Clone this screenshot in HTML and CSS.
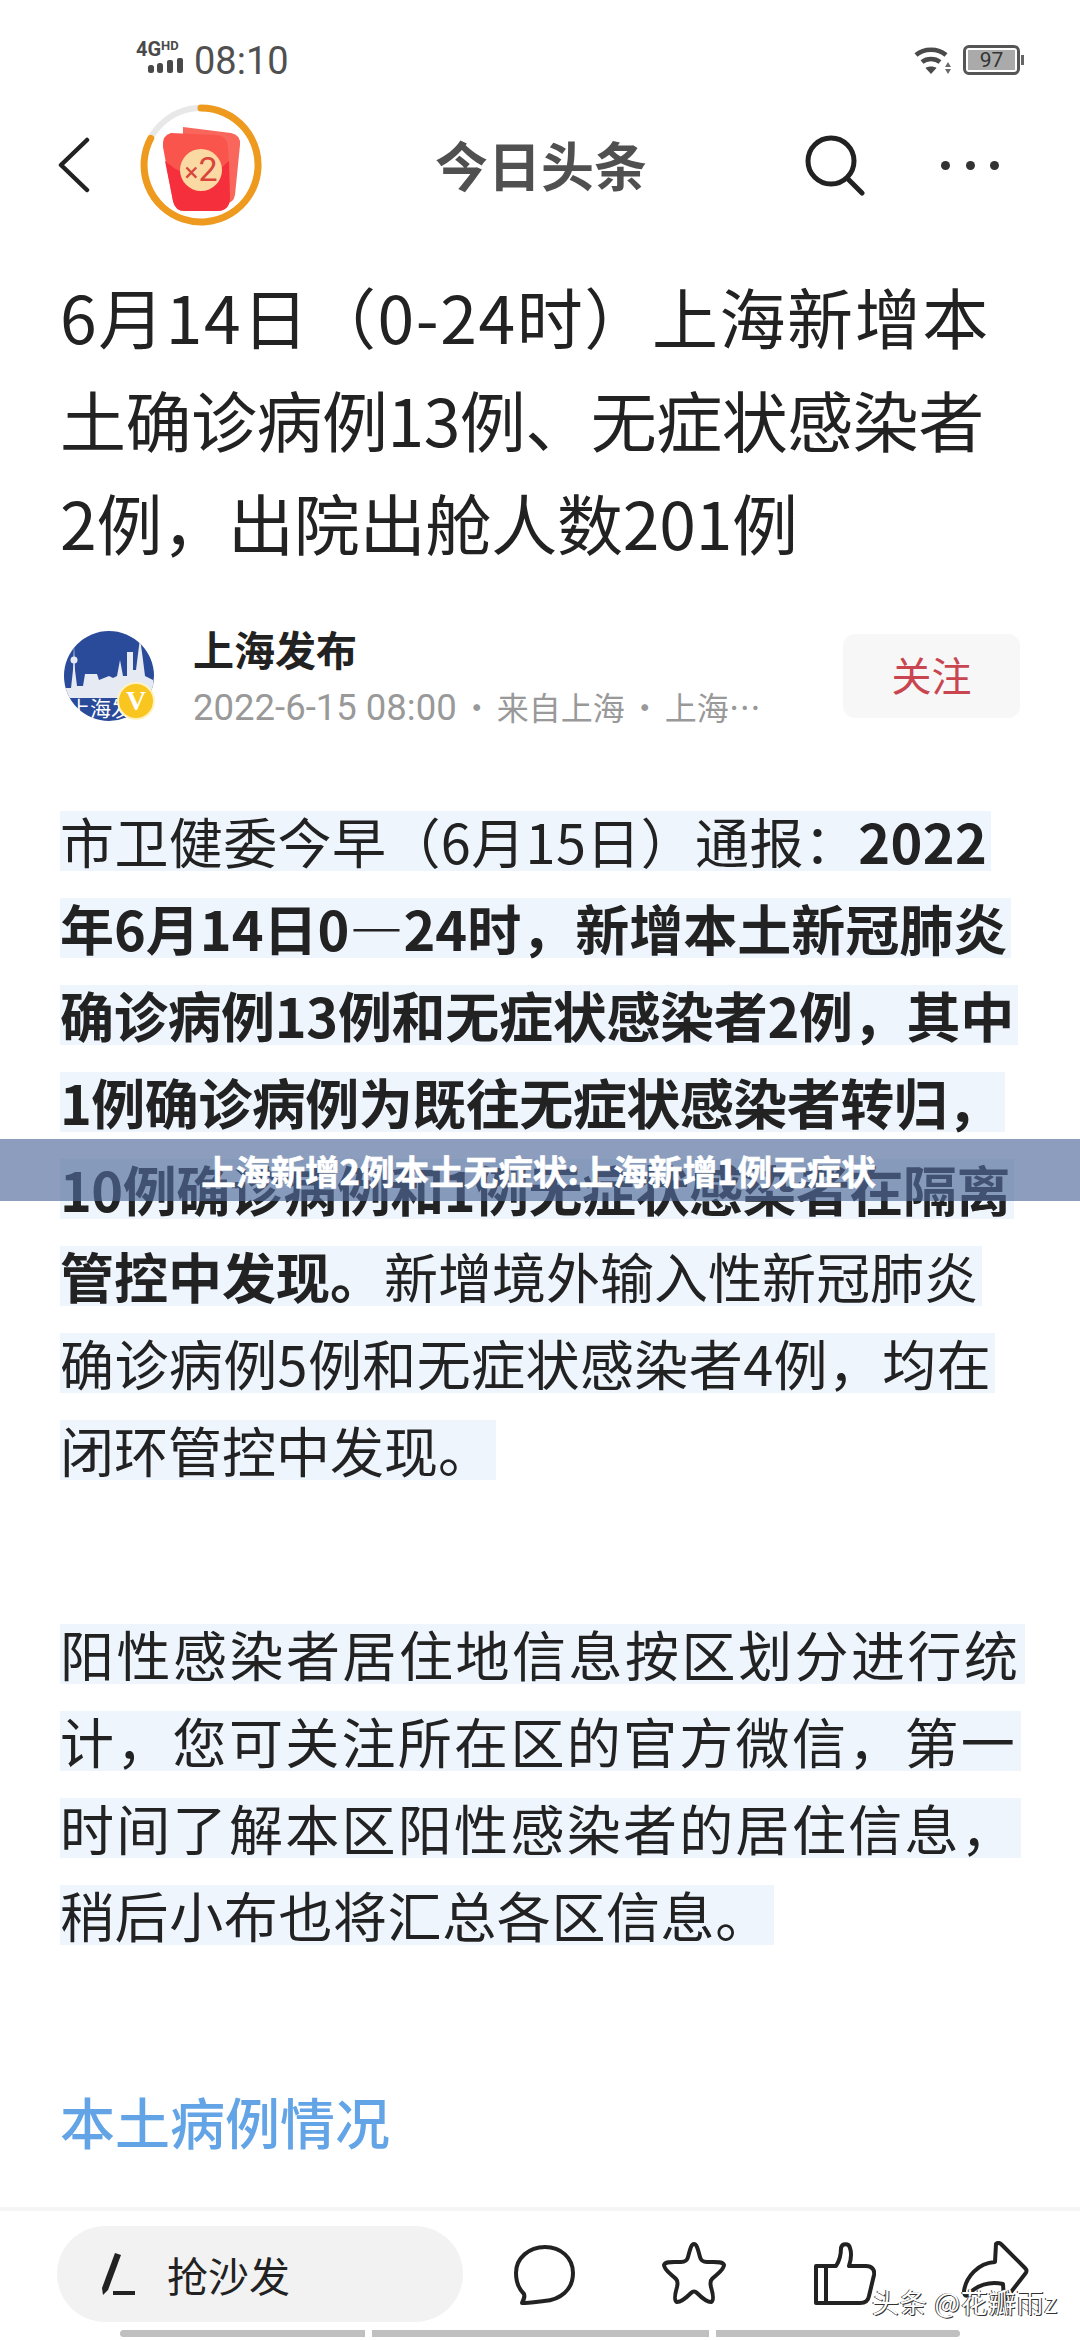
FILE: index.html
```html
<!DOCTYPE html>
<html lang="zh">
<head>
<meta charset="utf-8">
<title>上海新增2例本土无症状</title>
<link rel="stylesheet" href="styles.css">
</head>
<body>
  <div class="page">
    <!-- status bar -->
    <div class="status">
      <div class="net">
        <span class="net-label">4G<sup>HD</sup></span>
        <svg class="bars" width="35" height="15" viewBox="0 0 35 15"><g fill="#4a4a4a"><rect x="0" y="7" width="6" height="8" rx="2.500"/><rect x="9" y="5" width="6" height="10" rx="2.500"/><rect x="19" y="2" width="6" height="13" rx="2"/><rect x="29" y="0" width="6" height="15" rx="2"/></g></svg>
      </div>
      <span class="time">08:10</span>
      <span class="grow"></span>
      <svg class="wifi" width="38" height="28" viewBox="0 0 38 28">
        <g fill="none" stroke="#4a4a4a" stroke-width="4.500">
          <path d="M2 8 C10 1 24 1 32 8"/>
          <path d="M8 15 C13 11 21 11 26 15"/>
        </g>
        <path d="M11.500 21 C14 19 20 19 22.500 21 L17 27Z" fill="#4a4a4a"/>
        <path d="M34 15 l3 5 h-6z M31 22 h6 l-3 5z" fill="#6a6a6a"/>
      </svg>
      <div class="battery"><span class="battery-fill">97</span></div>
    </div>

    <!-- top bar -->
    <div class="topbar">
      <svg class="back" width="32" height="56" viewBox="0 0 32 56"><path d="M29 3 L3 28 L29 53" fill="none" stroke="#222" stroke-width="4.500" stroke-linecap="round" stroke-linejoin="round"/></svg>
      <div class="reward">
        <svg width="124" height="124" viewBox="0 0 124 124">
          <circle cx="62" cy="62" r="57" fill="none" stroke="#e8e8e8" stroke-width="6"/>
          <path d="M62 5 A57 57 0 1 1 11.700 35.300" fill="none" stroke="#ee9a1e" stroke-width="7" stroke-linecap="round"/>
          <path d="M44 24 L92 30 Q102 32 101 42 L96 92 Q94 102 84 100 L44 96Z" fill="#f9665c"/>
          <path d="M32 30 L76 32 Q88 32 89 44 L91 96 Q90 108 78 108 L46 108 Q36 108 34 98 L24 44 Q23 32 32 30Z" fill="#f9554d"/>
          <path d="M26 58 Q60 88 90 58 L91 96 Q90 108 78 108 L46 108 Q36 108 34 98Z" fill="#f52f3c"/>
          <circle cx="62" cy="67" r="21" fill="#fbd9a3"/>
        </svg>
        <span class="reward-label"><small>×</small>2</span>
      </div>
      <span class="brand">今日头条</span>
      <svg class="search" width="60" height="62" viewBox="0 0 60 62"><circle cx="26" cy="26" r="23" fill="none" stroke="#222" stroke-width="5"/><path d="M43 44 L57 58" stroke="#222" stroke-width="5" stroke-linecap="round"/></svg>
      <div class="more"><i></i><i></i><i></i></div>
    </div>

    <h1 class="headline">
      <span class="ls-p16">6月14日（0-24时）上海新增本</span>
      <span class="ls-m5">土确诊病例13例、无症状感染者</span>
      <span class="ls-m2">2例，出院出舱人数201例</span>
    </h1>

    <!-- author row -->
    <div class="author">
      <div class="avatar">
        <svg width="92" height="92" viewBox="0 0 92 92">
          <defs><clipPath id="round"><circle cx="46" cy="46" r="45"/></clipPath></defs>
          <circle cx="46" cy="46" r="45" fill="#2a4a9a"/>
          <path clip-path="url(#round)" d="M0 68 L0 58 L8 58 L10 40 L11 14 L12 40 L14 56 L20 56 L22 44 L34 44 L36 50 L46 46 L50 48 L54 46 L57 30 L60 46 L64 46 L64 22 L70 22 L70 40 L73 40 L77 8 L80 30 L82 46 L90 50 L92 68Z" fill="#e6ebf3"/>
          <circle cx="11" cy="30" r="3.500" fill="#e6ebf3"/>
        </svg>
        <span class="avatar-text">上海发</span>
        <span class="v-badge">V</span>
      </div>
      <div class="author-info">
        <div class="author-name">上海发布</div>
        <div class="author-meta"><span class="date">2022-6-15 08:00</span><span class="sep">·</span>来自上海<span class="sep">·</span>上海…</div>
      </div>
      <div class="follow">关注</div>
    </div>

    <!-- article body, every line has its own highlight band -->
    <div class="para">
      <div class="line ls-p4">市卫健委今早（6月15日）通报：<b>2022</b></div>
      <div class="line"><b>年6月14日0—24时，新增本土新冠肺炎</b></div>
      <div class="line ls-m3"><b>确诊病例13例和无症状感染者2例，其中</b></div>
      <div class="line ls-m5"><b>1例确诊病例为既往无症状感染者转归，</b></div>
      <div class="line ls-m5"><b>10例确诊病例和1例无症状感染者在隔离</b></div>
      <div class="line"><b>管控中发现。</b>新增境外输入性新冠肺炎</div>
      <div class="line ls-p4">确诊病例5例和无症状感染者4例，均在</div>
      <div class="line">闭环管控中发现。</div>
    </div>
    <div class="para">
      <div class="line ls-p25">阳性感染者居住地信息按区划分进行统</div>
      <div class="line ls-p23">计，您可关注所在区的官方微信，第一</div>
      <div class="line ls-p23">时间了解本区阳性感染者的居住信息，</div>
      <div class="line ls-p6">稍后小布也将汇总各区信息。</div>
    </div>
    <h2 class="section">本土病例情况</h2>

    <!-- bottom action bar -->
    <div class="actions">
      <div class="comment-box">
        <svg width="36" height="44" viewBox="0 0 36 44"><path d="M15 1 L21 3 L8 38 L3 43 L2 36Z" fill="#222"/><path d="M13 41 h22" stroke="#222" stroke-width="4"/></svg>
        <span>抢沙发</span>
      </div>
      <svg class="act-comment" width="62" height="60" viewBox="0 0 62 60"><path d="M31 2 C47 2 59 13 59 28 C59 45 46 55 30 56 C21 57 13 58 8 58 C10 54 11 52 10 49 C5 44 2 36 2 28 C2 13 15 2 31 2Z" fill="none" stroke="#222" stroke-width="4" stroke-linejoin="round"/></svg>
      <svg class="act-star" width="64" height="64" viewBox="0 0 64 64"><path d="M32 3 C35 3 36 9 38 16 C39 20 41 21 45 21 C53 21 61 20 62 24 C62 29 55 33 50 38 C48 40 48 42 49 46 C51 53 52 60 49 61 C45 61 39 56 35 52 C33 50 31 50 29 52 C25 56 19 61 15 61 C12 60 13 53 15 46 C16 42 16 40 14 38 C9 33 2 29 2 24 C3 20 11 21 19 21 C23 21 25 20 26 16 C28 9 29 3 32 3Z" fill="none" stroke="#222" stroke-width="4" stroke-linejoin="round"/></svg>
      <svg class="act-like" width="62" height="64" viewBox="0 0 62 64"><path d="M12 24 L22 24 C26 18 27 12 27 6 C28 1 35 1 36 6 C38 12 37 18 35 24 L52 24 C58 24 61 28 60 33 L55 54 C54 60 50 61 46 61 L12 61Z M2 24 H12 V61 H2Z" fill="none" stroke="#222" stroke-width="4" stroke-linejoin="round"/></svg>
      <svg class="act-share" width="68" height="62" viewBox="0 0 68 62"><path d="M34 3 C36 1 38 2 40 4 L63 27 C65 29 65 31 63 33 L42 60 L41 43 C28 40 14 44 6 54 C3 56 2 53 2 50 C4 36 16 22 33 21Z" fill="none" stroke="#222" stroke-width="4" stroke-linejoin="round"/></svg>
    </div>
    <div class="progress"><i class="p1"></i><i class="p2"></i><i class="p3"></i></div>

    <div class="banner">上海新增2例本土无症状:上海新增1例无症状</div>
    <div class="watermark">头条 @花瓣雨z</div>
  </div>
</body>
</html>
```

FILE: styles.css
```css
* {
    box-sizing: border-box;
}

html, body {
    margin: 0;
    padding: 0;
    background: #fff;
}

.page {
    position: relative;
    width: 1080px;
    height: 2340px;
    overflow: hidden;
    display: flex;
    flex-direction: column;
    font-family: "Noto Sans CJK SC", "Noto Sans", Roboto, sans-serif;
    color: #222;
}

/* status bar */
.status {
    height: 95px;
    padding: 41px 60px 0 136px;
    display: flex;
    align-items: flex-start;
    color: #4a4a4a;
}

.net {
    width: 58px;
    display: flex;
    flex-direction: column;
    align-items: flex-start;
}

.net-label {
    font-family: Roboto, sans-serif;
    font-weight: 700;
    font-size: 20px;
    line-height: 17px;
    white-space: nowrap;
}

.net-label sup {
    font-size: 13px;
    line-height: 0;
    vertical-align: 6px;
}

.bars {
    margin: 0 0 0 12px;
}

.time {
    font-family: Roboto, sans-serif;
    font-size: 38px;
    line-height: 40px;
    color: #505050;
}

.grow {
    flex: 1;
}

.wifi {
    margin: 6px 11px 0 0;
}

.battery {
    position: relative;
    width: 57px;
    height: 30px;
    margin-top: 4px;
    border: 3px solid #555;
    border-radius: 6px;
    padding: 2px;
}

.battery:after {
    content: "";
    position: absolute;
    right: -7px;
    top: 7px;
    width: 3px;
    height: 10px;
    background: #666;
}

.battery-fill {
    display: block;
    height: 100%;
    background: #aaa;
    font-family: Roboto, sans-serif;
    font-size: 21px;
    line-height: 20px;
    text-align: center;
    color: #333;
}

/* top bar */
.topbar {
    height: 140px;
    padding: 0 0 0 58px;
    display: flex;
    align-items: center;
}

.back {
    margin-right: 49px;
}

.reward {
    position: relative;
    width: 124px;
    height: 124px;
}

.reward-label {
    position: absolute;
    left: 0;
    right: 0;
    top: 46px;
    text-align: center;
    font-family: Roboto, sans-serif;
    font-size: 34px;
    line-height: 40px;
    color: #d9453a;
}

.reward-label small {
    font-size: 26px;
}

.brand {
    margin: -3px 0 0 172px;
    width: 215px;
    font-size: 53px;
    font-weight: 700;
    color: #505050;
    white-space: nowrap;
}

.search {
    margin: 2px 0 0 155px;
}

.more {
    margin-left: 76px;
    width: 58px;
    display: flex;
    justify-content: space-between;
}

.more i {
    width: 9px;
    height: 9px;
    border-radius: 50%;
    background: #333;
}

/* headline */
.headline {
    margin: 29px 0 0 60px;
    font-size: 66px;
    font-weight: 400;
    line-height: 103px;
    white-space: nowrap;
}

.headline span {
    display: block;
}

/* per line tracking, the source lines are not all set the same */
.ls-p25 { letter-spacing: 2.5px; }
.ls-p23 { letter-spacing: 2.3px; }
.ls-p16 { letter-spacing: 1.6px; }
.ls-p6 { letter-spacing: 0.6px; }
.ls-p4 { letter-spacing: 0.4px; }
.ls-m2 { letter-spacing: -0.2px; }
.ls-m3 { letter-spacing: -0.3px; }
.ls-m5 { letter-spacing: -0.5px; }

/* author */
.author {
    margin-top: 59px;
    padding: 0 60px 0 63px;
    height: 88px;
    display: flex;
    align-items: center;
}

.avatar {
    position: relative;
    width: 92px;
    height: 92px;
    flex: none;
}

.avatar svg {
    display: block;
}

.avatar-text {
    position: absolute;
    left: 6px;
    top: 65px;
    font-size: 21px;
    line-height: 24px;
    color: #fff;
    white-space: nowrap;
}

.v-badge {
    position: absolute;
    left: 54px;
    top: 52px;
    width: 38px;
    height: 38px;
    border-radius: 50%;
    background: #f8c61f;
    border: 2px solid #fff3c4;
    color: #fff;
    font-family: "Liberation Serif", serif;
    font-weight: 700;
    font-size: 28px;
    line-height: 34px;
    text-align: center;
}

.author-info {
    flex: 1;
    margin-left: 38px;
}

.author-name {
    font-size: 41px;
    font-weight: 700;
    line-height: 48px;
    margin-top: -3px;
}

.author-meta {
    margin-top: 11px;
    margin-bottom: -6px;
    font-size: 32px;
    line-height: 46px;
    color: #999;
    white-space: nowrap;
}

.date {
    font-family: Roboto, sans-serif;
    font-size: 36.500px;
}

.sep {
    display: inline-block;
    width: 40px;
    text-align: center;
}

.follow {
    width: 177px;
    height: 84px;
    background: #f7f7f7;
    border-radius: 12px;
    color: #c9454f;
    font-size: 40px;
    line-height: 80px;
    text-align: center;
}

/* article */
.para {
    margin: 91px 0 0 60px;
}

.para + .para {
    margin-top: 117px;
}

.line {
    width: fit-content;
    height: 60px;
    margin-bottom: 27px;
    padding-right: 4px;
    background: #eef5fd;
    font-size: 54px;
    line-height: 60px;
    white-space: nowrap;
}

.line b {
    font-weight: 700;
}

.section {
    margin: 118px 0 0 60px;
    font-size: 55px;
    font-weight: 500;
    line-height: 60px;
    color: #62a4e6;
}

/* bottom bar */
.actions {
    margin-top: auto;
    height: 123px;
    border-top: 4px solid #f5f5f5;
    padding: 15px 0 0 57px;
    display: flex;
    align-items: flex-start;
    position: relative;
}

.comment-box {
    width: 406px;
    height: 96px;
    border-radius: 48px;
    background: #f2f2f2;
    padding-left: 43px;
    display: flex;
    align-items: center;
    font-size: 41px;
}

.comment-box span {
    margin-left: 31px;
}

.act-comment {
    margin: 19px 0 0 51px;
}

.act-star {
    margin: 15px 0 0 86px;
}

.act-like {
    margin: 16px 0 0 88px;
}

.act-share {
    margin: 15px 0 0 86px;
}

.progress {
    height: 10px;
    padding: 0 0 3px 120px;
    display: flex;
    gap: 7px;
}

.progress i {
    display: block;
    height: 7px;
    background: #c0c0c0;
}

.p1 {
    width: 245px;
    border-radius: 4px 0 0 4px;
}

.p2 {
    width: 337px;
}

.p3 {
    width: 244px;
    border-radius: 0 4px 4px 0;
}

/* overlays */
.banner {
    position: absolute;
    left: 0;
    right: 0;
    top: 1139px;
    height: 62px;
    background: rgba(80, 106, 155, 0.66);
    color: #fff;
    font-size: 34.600px;
    font-weight: 700;
    line-height: 62px;
    text-align: center;
    -webkit-text-stroke: 0.6px #fff;
    padding-right: 3px;
}

.watermark {
    position: absolute;
    left: 872px;
    top: 2285px;
    font-size: 27px;
    letter-spacing: 0.8px;
    line-height: 34px;
    color: #fff;
    white-space: nowrap;
    text-shadow: 1px 1px 0 #333, -1px 0 0 #444;
}
```
